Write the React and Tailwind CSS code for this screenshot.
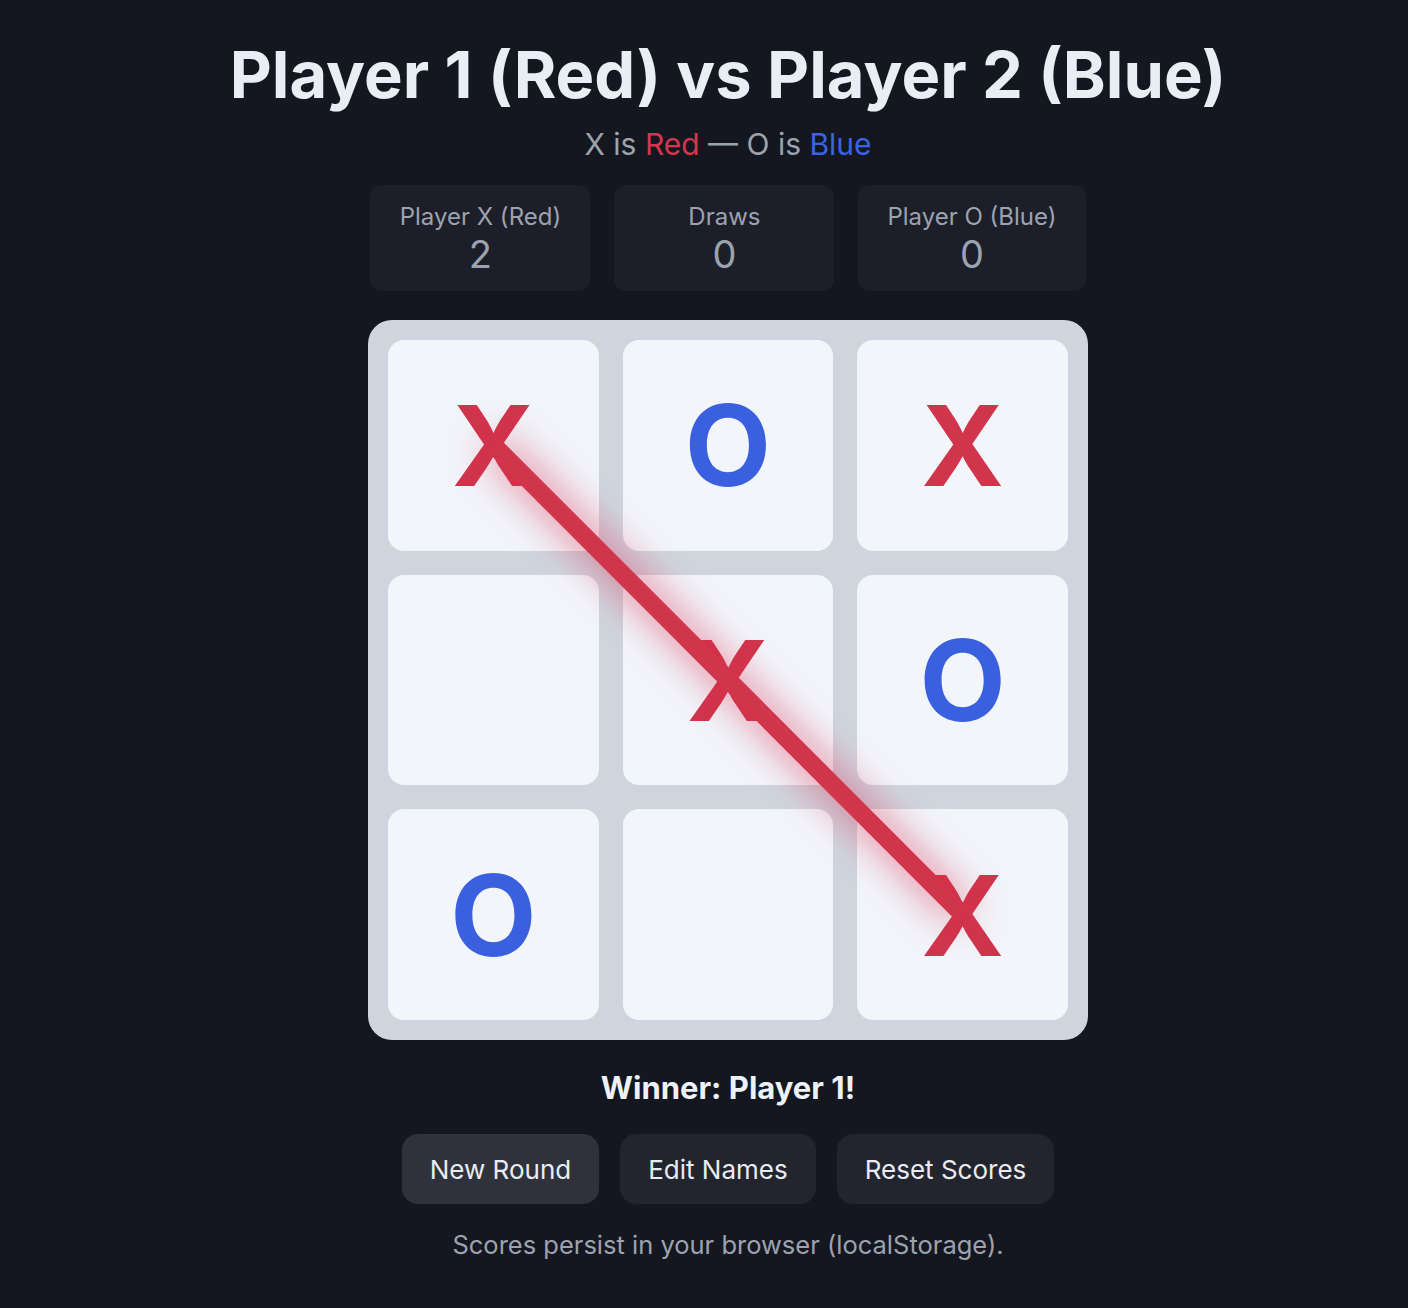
const cells = ["X", "O", "X", "", "X", "O", "O", "", "X"];

const scores = [
  { label: "Player X (Red)", value: 2 },
  { label: "Draws", value: 0 },
  { label: "Player O (Blue)", value: 0 },
];

export default function App() {
  return (
    <div className="min-h-screen w-full bg-[#141720] flex flex-col items-center pt-[36px] pl-12 font-['Inter',sans-serif]">
      <h1 className="text-[65px] font-bold leading-[78px] text-[#e9eef5]">
        Player 1 (Red) vs Player 2 (Blue)
      </h1>
      <p className="text-[30px] leading-[40px] text-[#9ca3af] mt-[10px]">
        X is <span className="text-[#d4364d]">Red</span> — O is{" "}
        <span className="text-[#3b63e6]">Blue</span>
      </p>

      <div className="flex gap-6 mt-[21px]">
        {scores.map((s) => (
          <div
            key={s.label}
            className="min-w-[220px] h-[106px] px-[29px] pt-[4px] rounded-xl bg-[#1c1f29] flex flex-col items-center justify-center"
          >
            <span className="text-[24px] leading-[28px] text-[#9ca3af]">{s.label}</span>
            <span className="text-[38px] leading-[46px] text-[#9ca3af]">{s.value}</span>
          </div>
        ))}
      </div>

      <div className="relative mt-[29px] w-[720px] h-[720px] rounded-[24px] bg-[#cfd5df] p-5 grid grid-cols-3 gap-6">
        {cells.map((c, i) => (
          <div
            key={i}
            className="rounded-2xl bg-[#f2f5fa] flex items-center justify-center"
          >
            {c && (
              <span
                className={
                  "text-[112px] font-bold leading-none " +
                  (c === "X" ? "text-[#d0354c]" : "text-[#3a60df]")
                }
              >
                {c}
              </span>
            )}
          </div>
        ))}
        <svg
          className="absolute inset-0 pointer-events-none drop-shadow-[0_0_20px_rgba(220,38,70,0.8)]"
          width="720"
          height="720"
          viewBox="0 0 720 720"
        >
          <line x1="125.5" y1="125" x2="594.5" y2="594.5" stroke="#d0354c" strokeWidth="18" />
        </svg>
      </div>

      <div className="mt-[30px] text-[31px] leading-[36px] font-bold text-[#eef2f7]">
        Winner: Player 1!
      </div>

      <div className="flex gap-[21px] mt-[28px]">
        <button className="h-[70px] px-7 rounded-2xl bg-[#2f323c] text-[26px] text-[#e8ecf2]">
          New Round
        </button>
        <button className="h-[70px] px-7 rounded-2xl bg-[#22252e] text-[26px] text-[#e8ecf2]">
          Edit Names
        </button>
        <button className="h-[70px] px-7 rounded-2xl bg-[#22252e] text-[26px] text-[#e8ecf2]">
          Reset Scores
        </button>
      </div>

      <p className="mt-[25px] text-[25.5px] leading-[32px] text-[#9ca3af]">
        Scores persist in your browser (localStorage).
      </p>
    </div>
  );
}
